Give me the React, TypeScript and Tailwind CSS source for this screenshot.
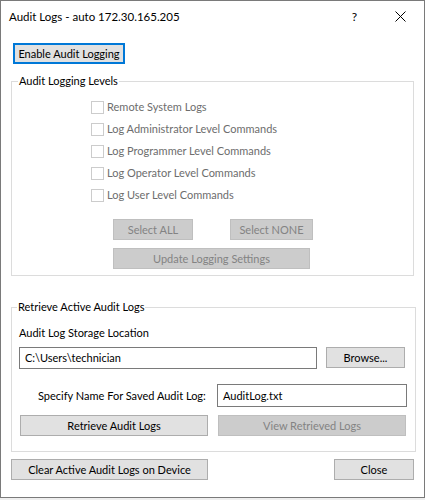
import React from 'react';

const levels = [
	'Remote System Logs',
	'Log Administrator Level Commands',
	'Log Programmer Level Commands',
	'Log Operator Level Commands',
	'Log User Level Commands',
];

const btn = 'h-[21px] border border-[#adadad] bg-[#e1e1e1] text-black flex items-center justify-center';
const btnOff = 'h-[21px] border border-[#bfbfbf] bg-[#cccccc] text-[#838383] flex items-center justify-center';

export default function App() {
	return (
		<div
			className="w-[425px] h-[500px] bg-[#eeeeee] text-[11px] leading-[16px] text-black whitespace-nowrap"
			style={{ fontFamily: 'Lato, "Noto Sans", sans-serif' }}>
			<div className="h-[498px] border border-[#7a7a7a] bg-white flex flex-col">
				{/* title bar */}
				<div className="h-[31px] flex items-center pl-[8px] text-[11.5px]">
					<span>Audit Logs - auto 172.30.165.205</span>
					<span className="ml-auto mr-[38px] text-[12px]">?</span>
					<svg width="11" height="11" viewBox="0 0 11 11" className="mr-[18px]">
						<path d="M0.5 0.5 L10.5 10.5 M10.5 0.5 L0.5 10.5" stroke="#000" strokeWidth="1" />
					</svg>
				</div>

				<div className="px-[10px]">
					<button className="mt-[11px] ml-[2px] w-[112px] h-[21px] border-2 border-[#0078d7] bg-[#e1e1e1] flex items-center justify-center">
						Enable Audit Logging
					</button>

					{/* logging levels */}
					<fieldset className="mt-[9px] border border-[#dcdcdc] h-[203px]">
						<legend className="ml-[6px] px-[1px]">Audit Logging Levels</legend>
						<div className="pt-[7px] pl-[79px] flex flex-col">
							{levels.map((label) => (
								<div key={label} className="h-[22px] flex items-center gap-[3px] text-[#6d6d6d]">
									<span className="w-[13px] h-[13px] border border-[#cccccc] bg-white" />
									<span>{label}</span>
								</div>
							))}
						</div>
						<div className="mt-[13px] pl-[101px] flex flex-col gap-[8px]">
							<div className="flex gap-[37px]">
								<button className={`${btnOff} w-[80px]`}>Select ALL</button>
								<button className={`${btnOff} w-[83px]`}>Select NONE</button>
							</div>
							<button className={`${btnOff} w-[197px]`}>Update Logging Settings</button>
						</div>
					</fieldset>

					{/* retrieve logs */}
					<fieldset className="mt-[23px] border border-[#dcdcdc] h-[153px]">
						<legend className="ml-[5px] px-[1px]">Retrieve Active Audit Logs</legend>
						<div className="pl-[7px] pr-[8px]">
							<div className="mt-[10px]">Audit Log Storage Location</div>
							<div className="mt-[6px] flex gap-[9px]">
								<div className="w-[298px] h-[22px] border border-[#7a7a7a] flex items-center pl-[5px]">
									C:\Users\technician
								</div>
								<button className={`${btn} w-[79px]`}>Browse...</button>
							</div>
							<div className="mt-[15px] flex items-center">
								<span className="ml-[19px] w-[179px]">Specify Name For Saved Audit Log:</span>
								<div className="w-[190px] h-[23px] border border-[#7a7a7a] flex items-center pl-[5px]">
									AuditLog.txt
								</div>
							</div>
							<div className="mt-[8px] ml-[1px] flex gap-[10px]">
								<button className={`${btn} w-[188px]`}>Retrieve Audit Logs</button>
								<button className={`${btnOff} w-[188px]`}>View Retrieved Logs</button>
							</div>
						</div>
					</fieldset>

					<div className="mt-[7px] flex justify-between">
						<button className={`${btn} w-[197px]`}>Clear Active Audit Logs on Device</button>
						<button className={`${btn} w-[80px]`}>Close</button>
					</div>
				</div>
			</div>
		</div>
	);
}
